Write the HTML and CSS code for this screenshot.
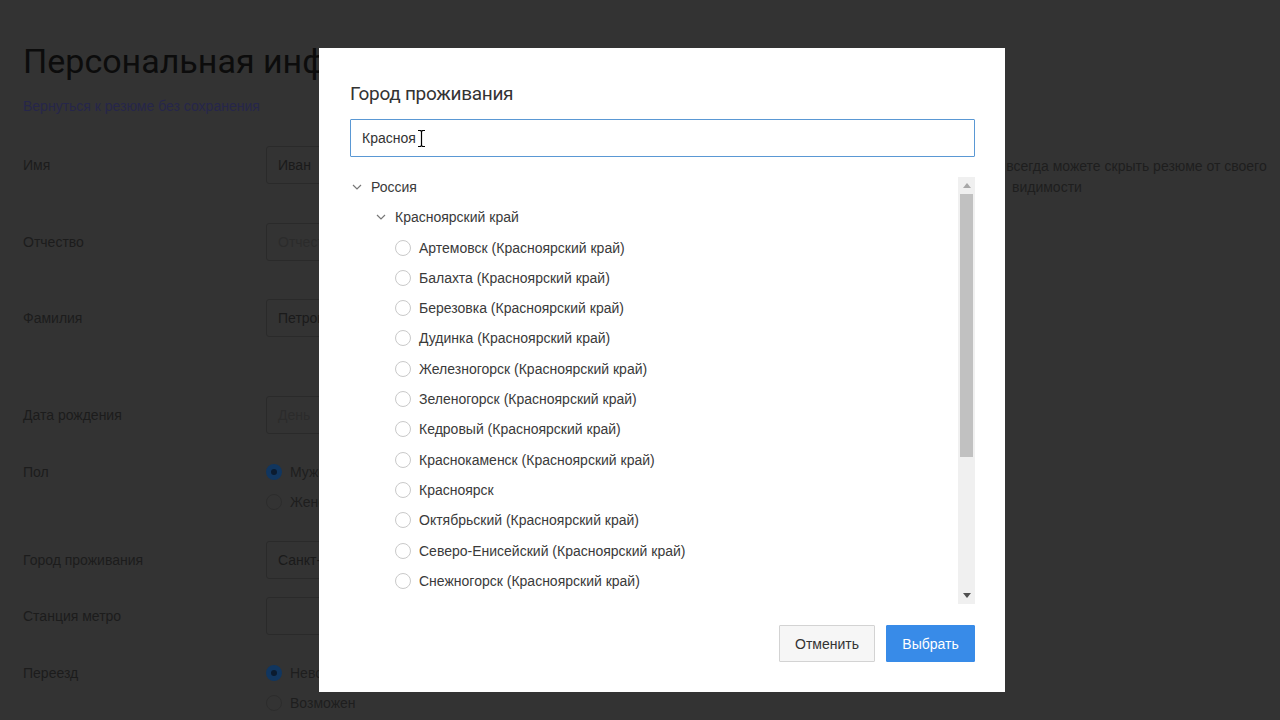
FILE: index.html
```html
<!DOCTYPE html>
<html lang="ru">
<head>
    <meta charset="UTF-8">
    <meta name="viewport" content="width=device-width, initial-scale=1.0">
    <title>Персональная информация</title>
    <link rel="stylesheet" href="styles.css">
</head>
<body>

    <div class="page">
        <h1 class="page-title">Персональная информация</h1>
        <a class="back-link" href="#">Вернуться к резюме без сохранения</a>

        <div class="form">
            <div class="row row-name">
                <div class="label">Имя</div>
                <div class="field"><div class="input">Иван</div></div>
                <div class="note">Вы всегда можете скрыть резюме от своего<br><span class="note-tail">видимости</span></div>
            </div>

            <div class="row row-middle">
                <div class="label">Отчество</div>
                <div class="field"><div class="input placeholder">Отчество</div></div>
            </div>

            <div class="row row-last">
                <div class="label">Фамилия</div>
                <div class="field"><div class="input">Петров</div></div>
            </div>

            <div class="row row-birth">
                <div class="label">Дата рождения</div>
                <div class="field"><div class="input input-short placeholder">День</div></div>
            </div>

            <div class="row row-gender">
                <div class="label label-radio">Пол</div>
                <div class="field">
                    <div class="radio-line"><span class="radio checked"></span>Мужской</div>
                    <div class="radio-line"><span class="radio"></span>Женский</div>
                </div>
            </div>

            <div class="row row-city">
                <div class="label">Город проживания</div>
                <div class="field"><div class="input">Санкт-Петербург</div></div>
            </div>

            <div class="row row-metro">
                <div class="label">Станция метро</div>
                <div class="field"><div class="input"></div></div>
            </div>

            <div class="row">
                <div class="label label-radio">Переезд</div>
                <div class="field">
                    <div class="radio-line"><span class="radio checked"></span>Невозможен</div>
                    <div class="radio-line"><span class="radio"></span>Возможен</div>
                </div>
            </div>
        </div>
    </div>

    <!-- city picker dialog -->
    <div class="modal">
        <h2 class="modal-title">Город проживания</h2>

        <div class="search">
            <input type="text" class="search-input" value="Красноя">
            <svg class="ibeam" width="9" height="19" viewBox="0 0 9 19">
                <path d="M1 1.5h2.5l1 1 1-1H8M4.5 2.5v14M1 17.5h2.5l1-1 1 1H8" fill="none" stroke="#fff" stroke-width="3"/>
                <path d="M1 1.5h2.5l1 1 1-1H8M4.5 2.5v14M1 17.5h2.5l1-1 1 1H8" fill="none" stroke="#000" stroke-width="1.2"/>
            </svg>
        </div>

        <div class="tree-box">
            <div class="tree">
                <div class="tree-row level-0">
                    <svg class="chevron" width="10" height="10" viewBox="0 0 10 10"><path d="M1 3l4 4 4-4" fill="none" stroke="#777" stroke-width="1.2"/></svg>
                    <span>Россия</span>
                </div>
                <div class="tree-row level-1">
                    <svg class="chevron" width="10" height="10" viewBox="0 0 10 10"><path d="M1 3l4 4 4-4" fill="none" stroke="#777" stroke-width="1.2"/></svg>
                    <span>Красноярский край</span>
                </div>
                <div class="tree-row level-2"><span class="option"></span>Артемовск (Красноярский край)</div>
                <div class="tree-row level-2"><span class="option"></span>Балахта (Красноярский край)</div>
                <div class="tree-row level-2"><span class="option"></span>Березовка (Красноярский край)</div>
                <div class="tree-row level-2"><span class="option"></span>Дудинка (Красноярский край)</div>
                <div class="tree-row level-2"><span class="option"></span>Железногорск (Красноярский край)</div>
                <div class="tree-row level-2"><span class="option"></span>Зеленогорск (Красноярский край)</div>
                <div class="tree-row level-2"><span class="option"></span>Кедровый (Красноярский край)</div>
                <div class="tree-row level-2"><span class="option"></span>Краснокаменск (Красноярский край)</div>
                <div class="tree-row level-2"><span class="option"></span>Красноярск</div>
                <div class="tree-row level-2"><span class="option"></span>Октябрьский (Красноярский край)</div>
                <div class="tree-row level-2"><span class="option"></span>Северо-Енисейский (Красноярский край)</div>
                <div class="tree-row level-2"><span class="option"></span>Снежногорск (Красноярский край)</div>
                <div class="tree-row level-2"><span class="option"></span>Солнечный (Красноярский край)</div>
                <div class="tree-row level-2"><span class="option"></span>Сосновоборск (Красноярский край)</div>
                <div class="tree-row level-2"><span class="option"></span>Тура (Красноярский край)</div>
                <div class="tree-row level-2"><span class="option"></span>Ужур (Красноярский край)</div>
                <div class="tree-row level-2"><span class="option"></span>Уяр (Красноярский край)</div>
                <div class="tree-row level-2"><span class="option"></span>Шарыпово (Красноярский край)</div>
                <div class="tree-row level-2"><span class="option"></span>Шушенское (Красноярский край)</div>
            </div>

            <div class="scrollbar">
                <div class="scroll-btn">
                    <svg width="8" height="5" viewBox="0 0 8 5"><path d="M0 5L4 0l4 5z" fill="#a8a8a8"/></svg>
                </div>
                <div class="scroll-thumb"></div>
                <div class="scroll-track"></div>
                <div class="scroll-btn">
                    <svg width="8" height="5" viewBox="0 0 8 5"><path d="M0 0h8L4 5z" fill="#505050"/></svg>
                </div>
            </div>
        </div>

        <div class="modal-footer">
            <button class="btn btn-cancel">Отменить</button>
            <button class="btn btn-primary">Выбрать</button>
        </div>
    </div>

</body>
</html>
```

FILE: styles.css
```css
body {
    margin: 0;
    background-color: #333333;
    font-family: "Liberation Sans", Arial, sans-serif;
    font-size: 14px;
    color: #1c1c1c;
}

/* dimmed page behind the dialog */

.page {
    padding: 0 23px;
}

.page-title {
    margin: 41px 0 0;
    font-family: Roboto, "Liberation Sans", sans-serif;
    font-size: 34px;
    font-weight: 400;
    line-height: 40px;
    color: #0c0c0c;
}

.back-link {
    display: block;
    margin-top: 15px;
    line-height: 20px;
    color: #26264a;
    text-decoration: none;
}

.form {
    margin-top: 30px;
}

.row {
    display: grid;
    grid-template-columns: 243px 694px 1fr;
    align-items: start;
}

.row-name {
    margin-bottom: 39px;
}

.row-middle {
    margin-bottom: 38px;
}

.row-last {
    margin-bottom: 59px;
}

.row-birth {
    margin-bottom: 28px;
}

.row-gender {
    margin-bottom: 29px;
}

.row-city {
    margin-bottom: 18px;
}

.row-metro {
    margin-bottom: 28px;
}

.label {
    line-height: 38px;
    color: #1c1c1c;
}

.label-radio {
    line-height: 20px;
}

.input {
    width: 300px;
    height: 38px;
    padding: 0 11px;
    border: 1px solid #2a2a2a;
    border-radius: 3px;
    box-sizing: border-box;
    line-height: 36px;
    color: #1a1a1a;
}

.input.placeholder {
    color: #2b2b2b;
}

.input-short {
    width: 90px;
}

.radio-line {
    display: flex;
    align-items: center;
    gap: 8px;
    height: 20px;
    margin-bottom: 10px;
    color: #1e1e1e;
}

.radio-line:last-child {
    margin-bottom: 0;
}

.radio {
    width: 16px;
    height: 16px;
    border: 1px solid #2c2c2c;
    border-radius: 50%;
    box-sizing: border-box;
}

.radio.checked {
    border: 5px solid #11365f;
    background-color: #0b1b2f;
}

.note {
    height: 28px;
    margin-top: 10px;
    padding-left: 23px;
    line-height: 21px;
    color: #1e1e1e;
    white-space: nowrap;
}

.note-tail {
    padding-left: 29px;
}

/* dialog */

.modal {
    position: fixed;
    left: 319px;
    top: 48px;
    width: 686px;
    height: 644px;
    padding: 34px 30px 30px 31px;
    box-sizing: border-box;
    background-color: #ffffff;
    display: flex;
    flex-direction: column;
}

.modal-title {
    margin: 0;
    font-family: Roboto, "Liberation Sans", sans-serif;
    font-size: 19px;
    font-weight: 400;
    letter-spacing: -0.3px;
    line-height: 24px;
    color: #333333;
}

.search {
    position: relative;
    margin-top: 13px;
}

.search-input {
    display: block;
    width: 100%;
    height: 38px;
    padding: 0 11px;
    border: 1px solid #5a98d4;
    border-radius: 1px;
    box-sizing: border-box;
    font-family: "Liberation Sans", Arial, sans-serif;
    font-size: 14px;
    color: #333333;
    outline: none;
}

.ibeam {
    position: absolute;
    left: 67px;
    top: 10px;
}

.tree-box {
    display: flex;
    align-items: flex-start;
    height: 427px;
    margin-top: 20px;
}

.tree {
    flex: 1;
    height: 425px;
    overflow: hidden;
}

.tree-row {
    display: flex;
    align-items: center;
    height: 20px;
    margin-bottom: 10.3px;
    line-height: 20px;
    color: #3a3a3a;
    white-space: nowrap;
}

.level-0 {
    padding-left: 2px;
    gap: 9px;
}

.level-1 {
    padding-left: 26px;
    gap: 9px;
}

.level-2 {
    padding-left: 45px;
    gap: 8px;
}

.option {
    width: 16px;
    height: 16px;
    border: 1px solid #c9c9c9;
    border-radius: 50%;
    box-sizing: border-box;
    background-color: #ffffff;
    flex-shrink: 0;
}

.scrollbar {
    width: 17px;
    height: 427px;
    display: flex;
    flex-direction: column;
    background-color: #f0f0f0;
}

.scroll-btn {
    height: 17px;
    display: flex;
    align-items: center;
    justify-content: center;
}

.scroll-thumb {
    height: 263px;
    margin: 0 2px;
    background-color: #c1c1c1;
}

.scroll-track {
    flex: 1;
}

.modal-footer {
    display: flex;
    justify-content: flex-end;
    gap: 11px;
    margin-top: 21px;
}

.btn {
    height: 37px;
    padding: 0;
    border-radius: 1px;
    font-family: "Liberation Sans", Arial, sans-serif;
    font-size: 14px;
    cursor: pointer;
}

.btn-cancel {
    width: 96px;
    border: 1px solid #d3d3d3;
    background-color: #f6f6f6;
    color: #333333;
}

.btn-primary {
    width: 89px;
    border: 1px solid #388be8;
    background-color: #388be8;
    color: #ffffff;
}
```
